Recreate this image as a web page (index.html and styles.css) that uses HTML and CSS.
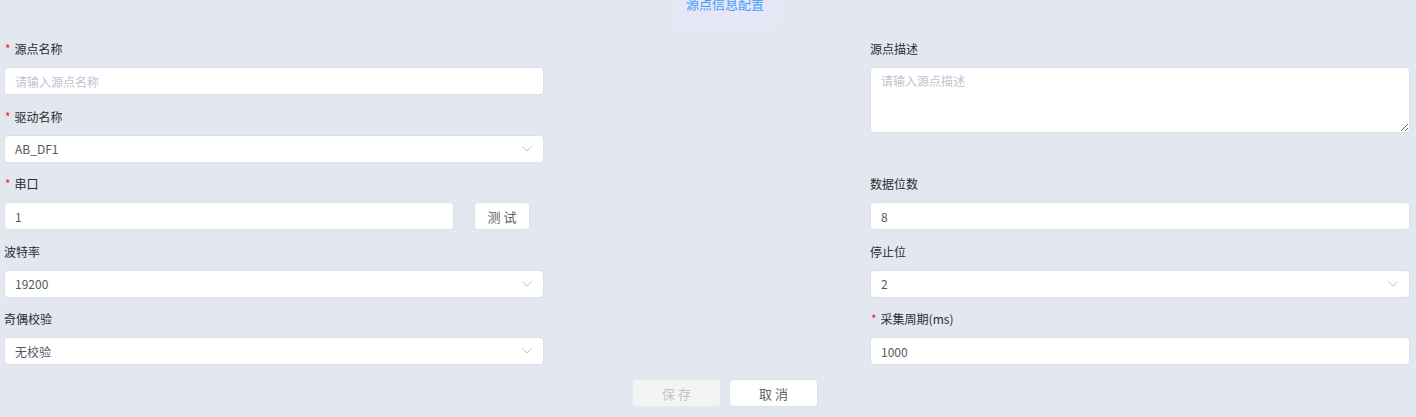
FILE: index.html
```
<!DOCTYPE html>
<html>
<head>
  <meta charset="UTF-8">
  <link rel="stylesheet" href="styles.css">
</head>
<body>
  <div class="tab-bar">
    <div class="tab-title"><span>源点信息配置</span></div>
  </div>

  <div class="config-form">
    <div class="form-item">
      <div class="form-label"><span class="req">*</span>源点名称</div>
      <input type="text" class="text-input" placeholder="请输入源点名称">
    </div>
    <div class="form-item span-2">
      <div class="form-label">源点描述</div>
      <textarea class="text-area" placeholder="请输入源点描述"></textarea>
    </div>

    <div class="form-item">
      <div class="form-label"><span class="req">*</span>驱动名称</div>
      <div class="select-box">
        <span>AB_DF1</span>
        <svg class="arrow" width="10" height="6" viewBox="0 0 10 6"><path d="M0.5 0.5 L5 5 L9.5 0.5" fill="none" stroke="#c0c4cc" stroke-width="1"/></svg>
      </div>
    </div>

    <div class="form-item">
      <div class="form-label"><span class="req">*</span>串口</div>
      <div class="input-row">
        <input type="text" class="text-input port-input" value="1">
        <button class="btn">测 试</button>
      </div>
    </div>
    <div class="form-item">
      <div class="form-label">数据位数</div>
      <input type="text" class="text-input" value="8">
    </div>

    <div class="form-item">
      <div class="form-label">波特率</div>
      <div class="select-box">
        <span>19200</span>
        <svg class="arrow" width="10" height="6" viewBox="0 0 10 6"><path d="M0.5 0.5 L5 5 L9.5 0.5" fill="none" stroke="#c0c4cc" stroke-width="1"/></svg>
      </div>
    </div>
    <div class="form-item">
      <div class="form-label">停止位</div>
      <div class="select-box">
        <span>2</span>
        <svg class="arrow" width="10" height="6" viewBox="0 0 10 6"><path d="M0.5 0.5 L5 5 L9.5 0.5" fill="none" stroke="#c0c4cc" stroke-width="1"/></svg>
      </div>
    </div>

    <div class="form-item">
      <div class="form-label">奇偶校验</div>
      <div class="select-box">
        <span>无校验</span>
        <svg class="arrow" width="10" height="6" viewBox="0 0 10 6"><path d="M0.5 0.5 L5 5 L9.5 0.5" fill="none" stroke="#c0c4cc" stroke-width="1"/></svg>
      </div>
    </div>
    <div class="form-item">
      <div class="form-label"><span class="req">*</span>采集周期(ms)</div>
      <input type="text" class="text-input" value="1000">
    </div>
  </div>

  <div class="form-footer">
    <button class="btn btn-wide" disabled>保 存</button>
    <button class="btn btn-wide">取 消</button>
  </div>
</body>
</html>
```

FILE: styles.css
```
body {
  margin: 0;
  width: 1416px;
  height: 417px;
  overflow: hidden;
  background: #e3e7f0;
  color: #303133;
  font-family: "Noto Sans CJK SC", "Liberation Sans", sans-serif;
  font-size: 12px;
}
.tab-bar {
  display: flex;
  justify-content: center;
  padding-left: 34px;
  height: 27px;
}
.tab-title {
  width: 105px;
  height: 27px;
  background: #e7e6f6;
  color: #409eff;
  font-size: 13px;
  text-align: center;
  overflow: hidden;
}
.tab-title span {
  display: block;
  line-height: 16px;
  margin-top: -4px;
}
.config-form {
  display: grid;
  grid-template-columns: 540px 540px;
  justify-content: space-between;
  padding: 13px 6px 0 4px;
}
.form-item {
  margin-bottom: 12.5px;
}
.form-item.span-2 {
  grid-row: span 2;
}
.form-label {
  line-height: 18px;
  padding-bottom: 9px;
  color: #2b2d31;
}
.req {
  color: #f5222d;
  margin: 0 4px 0 1px;
}
.text-input, .select-box, .text-area {
  width: 100%;
  box-sizing: border-box;
  height: 28px;
  border: 1px solid #dcdfe6;
  border-radius: 4px;
  background: #fff;
  padding: 0 10px;
  font-family: inherit;
  font-size: 12px;
  color: #555860;
  outline: none;
  display: block;
  margin: 0;
}
.text-input::placeholder, .text-area::placeholder {
  color: #c0c4cc;
}
.text-area {
  height: 66px;
  padding: 4px 10px;
  line-height: 18px;
}
.select-box {
  display: flex;
  align-items: center;
  justify-content: space-between;
}
.arrow {
  margin-right: 1px;
}
.input-row {
  display: flex;
  gap: 20px;
}
.port-input {
  width: 450px;
}
.btn {
  height: 28px;
  width: 56px;
  padding: 0;
  border: 1px solid #dcdfe6;
  border-radius: 4px;
  background: #fff;
  color: #606266;
  font-family: inherit;
  font-size: 13px;
  cursor: pointer;
}
.btn:disabled {
  background: #f4f4f5;
  border-color: #e4e7ed;
  color: #c0c4cc;
  cursor: not-allowed;
}
.btn-wide {
  width: 89px;
}
.form-footer {
  display: flex;
  justify-content: center;
  gap: 8px;
  padding-left: 34px;
  margin-top: 1.5px;
}
```
